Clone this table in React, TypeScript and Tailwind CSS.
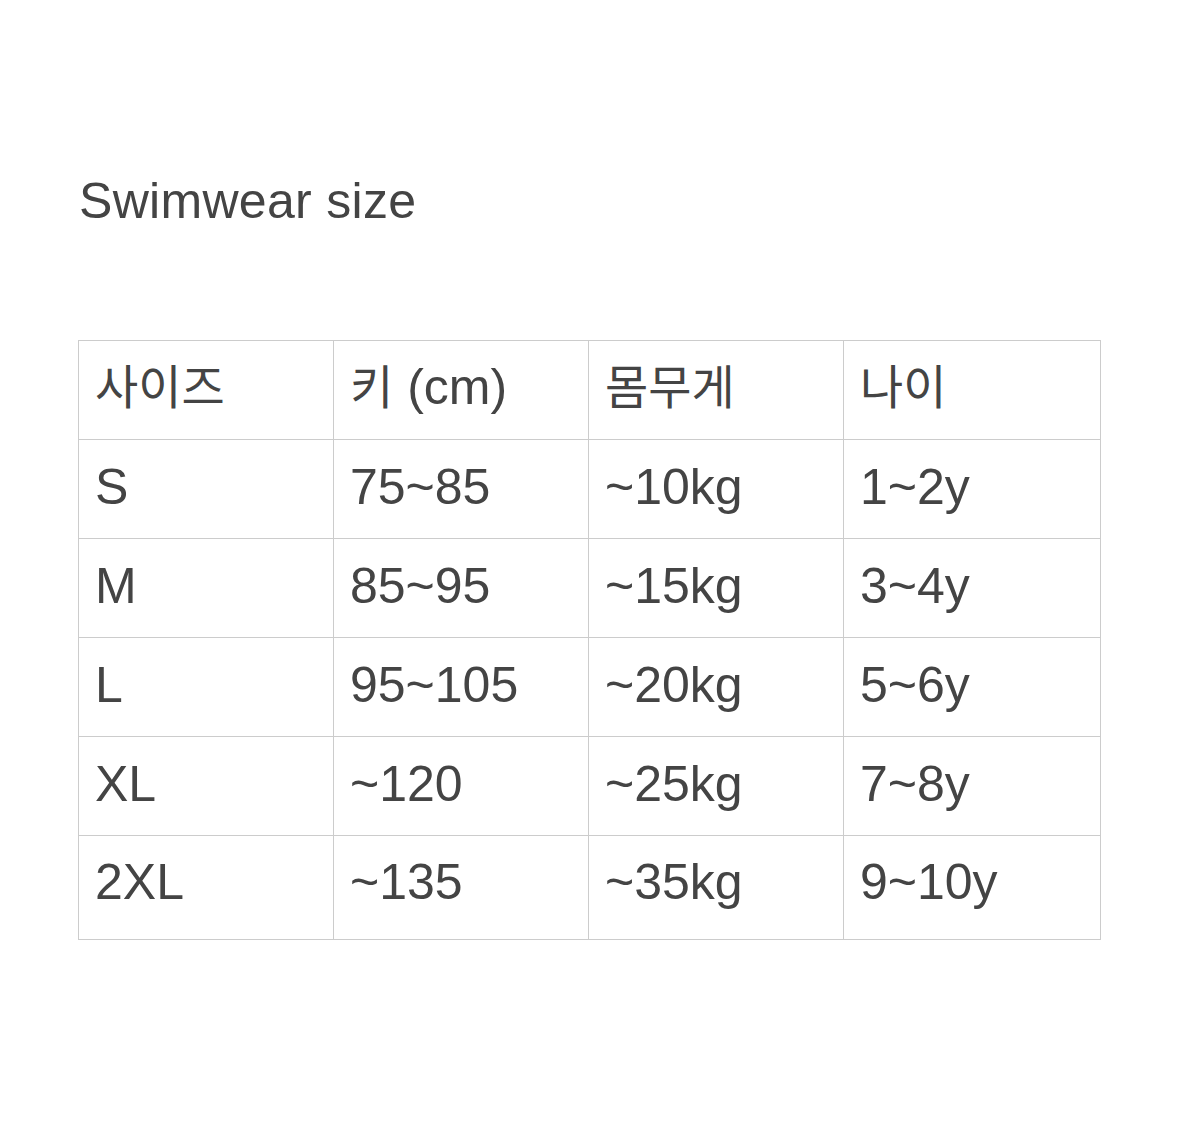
import React from 'react';

const rows = [
    ['S', '75~85', '~10kg', '1~2y'],
    ['M', '85~95', '~15kg', '3~4y'],
    ['L', '95~105', '~20kg', '5~6y'],
    ['XL', '~120', '~25kg', '7~8y'],
    ['2XL', '~135', '~35kg', '9~10y'],
];

const App: React.FC = () => {
    return (
        <div
            className="min-h-screen bg-white text-[#444444] pl-[78px] pr-[78px] pt-[170px]"
            style={{ fontFamily: '"Liberation Sans", "Noto Sans CJK KR", sans-serif' }}
        >
            <h1 className="text-[50px] leading-[62px] pl-[1px] tracking-[0.3px]">Swimwear size</h1>

            <table className="mt-[108px] w-[1022px] border-collapse table-fixed text-[50px]">
                <colgroup>
                    <col className="w-[255px]" />
                    <col className="w-[255px]" />
                    <col className="w-[255px]" />
                    <col className="w-[257px]" />
                </colgroup>
                <thead>
                    <tr className="h-[99px]">
                        <th className="border border-[#cccccc] text-left font-normal pl-4 pb-[6px] align-middle">
                            <span className="text-[47px]">사이즈</span>
                        </th>
                        <th className="border border-[#cccccc] text-left font-normal pl-4 pb-[6px] align-middle">
                            <span className="text-[47px]">키</span> (cm)
                        </th>
                        <th className="border border-[#cccccc] text-left font-normal pl-4 pb-[6px] align-middle">
                            <span className="text-[47px]">몸무게</span>
                        </th>
                        <th className="border border-[#cccccc] text-left font-normal pl-4 pb-[6px] align-middle">
                            <span className="text-[47px]">나이</span>
                        </th>
                    </tr>
                </thead>
                <tbody>
                    {rows.map((row, i) => (
                        <tr key={row[0]} className={i === rows.length - 1 ? 'h-[104px]' : 'h-[99px]'}>
                            {row.map((cell, j) => (
                                <td
                                    key={j}
                                    className={`border border-[#cccccc] pl-4 align-middle ${i === rows.length - 1 ? 'pb-[10px]' : 'pb-[4px]'}`}
                                >
                                    {cell}
                                </td>
                            ))}
                        </tr>
                    ))}
                </tbody>
            </table>
        </div>
    );
};

export default App;
